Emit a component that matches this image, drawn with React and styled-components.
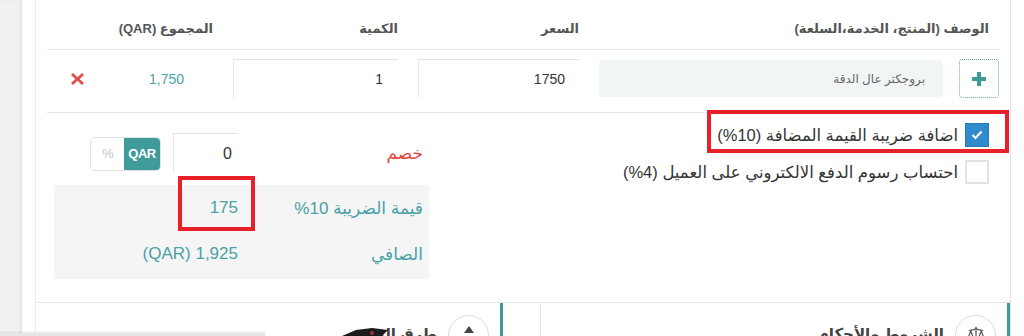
import React from 'react';
import styled, { createGlobalStyle } from 'styled-components';
import { Scale } from 'lucide-react';

const Global = createGlobalStyle`
  html, body { margin: 0; padding: 0; background: #fff; overflow: hidden; }
  body { font-family: "Liberation Sans", "DejaVu Sans", sans-serif; }
  * { box-sizing: border-box; }
`;

const TEAL = '#3f9a9a';
const TEAL_TEXT = '#4aa2a6';

const Page = styled.div`
  position: relative;
  display: flex;
  width: 1024px;
  height: 336px;
  overflow: hidden;
  background: #fff;
`;

const Gutter = styled.div`
  flex: none;
  width: 22px;
  background: #f1f1f1;
  box-shadow: inset -2px 0 3px rgba(0, 0, 0, 0.05);
`;

const Card = styled.div`
  flex: none;
  width: 989px;
  padding-left: 13px;
`;

const Inner = styled.div`
  height: 100%;
  direction: rtl;
  display: flex;
  flex-direction: column;
  border-left: 1px solid #ececec;
  border-right: 1px solid #e3e3e3;
`;

const Top = styled.div`
  flex: none;
  padding: 0 11px;
`;

const Grid = styled.div`
  display: grid;
  grid-template-columns: 400px 161px 165px 1fr;
  column-gap: 20px;
  border-bottom: 1px solid #e6e6e6;
`;

const HeaderRow = styled(Grid)`
  height: 50px;
  align-items: center;
  padding-top: 7px;
`;

const HeaderCell = styled.div`
  font-size: 13px;
  font-weight: bold;
  color: #555;
  padding-right: ${(p) => p.$pad || 0}px;
  white-space: nowrap;
`;

const ItemRow = styled(Grid)`
  height: 63px;
  align-items: start;
  padding-top: 9px;
`;

const DescCell = styled.div`
  display: flex;
  gap: 16px;
`;

const PlusButton = styled.div`
  flex: none;
  width: 40px;
  height: 39px;
  border: 1px dotted #6aa9ab;
  border-radius: 3px;
  display: flex;
  align-items: center;
  justify-content: center;
`;

const DescInput = styled.div`
  flex: 1;
  height: 37px;
  margin-top: 1px;
  background: #f2f5f5;
  border-radius: 4px;
  padding-right: 18px;
  display: flex;
  align-items: center;
  font-size: 12px;
  color: #666;
`;

const NumInput = styled.div`
  height: 39px;
  border-top: 1px solid #e3e3e3;
  border-left: 1px solid #e8e8e8;
  padding-right: ${(p) => p.$pad}px;
  display: flex;
  align-items: center;
  font-size: 14px;
  color: #333;
`;

const TotalCell = styled.div`
  height: 39px;
  display: flex;
  align-items: center;
  padding-right: 29px;
`;

const TotalValue = styled.span`
  font-size: 14px;
  color: ${TEAL_TEXT};
`;

const RemoveX = styled.span`
  margin-right: auto;
  margin-left: 23px;
  display: flex;
`;

const Summary = styled.div`
  flex: none;
  height: 190px;
  display: flex;
  justify-content: space-between;
  padding: 10px 21px 0 18px;
  border-bottom: 1px solid #e6e6e6;
`;

const Options = styled.div`
  display: flex;
  flex-direction: column;
  align-items: flex-start;
  gap: 13px;
`;

const OptionRow = styled.div`
  position: relative;
  display: flex;
  align-items: center;
  gap: 7px;
  font-size: 16.5px;
  color: #333;
`;

const Box = styled.span`
  flex: none;
  width: 24px;
  height: 24px;
  display: flex;
  align-items: center;
  justify-content: center;
  border: ${(p) => (p.$checked ? '1px solid #2a7db6' : '2px solid #e2e2de')};
  background: ${(p) => (p.$checked ? '#2f8bcb' : '#fff')};
`;

const Highlight = styled.div`
  position: absolute;
  border: 4px solid #e8202a;
  pointer-events: none;
`;

const Totals = styled.div`
  width: 375px;
  margin-top: 10px;
  display: flex;
  flex-direction: column;
  gap: 12px;
`;

const DiscountRow = styled.div`
  display: flex;
  align-items: center;
`;

const LabelCell = styled.div`
  width: 191px;
  padding-right: 6px;
  font-size: 17px;
  color: ${(p) => p.$color || TEAL_TEXT};
`;

const SmallInput = styled.div`
  width: 65px;
  height: 40px;
  border-top: 1px solid #e3e3e3;
  border-left: 1px solid #e8e8e8;
  padding-right: 6px;
  display: flex;
  align-items: center;
  font-size: 16px;
  color: #333;
`;

const Toggle = styled.div`
  margin-right: 12px;
  margin-top: 1px;
  display: flex;
  direction: ltr;
  height: 34px;
  border: 1px solid #e2e2e2;
  border-radius: 5px;
  overflow: hidden;
`;

const ToggleOpt = styled.span`
  width: ${(p) => p.$w}px;
  display: flex;
  align-items: center;
  justify-content: center;
  font-size: 13px;
  font-weight: ${(p) => (p.$on ? 'bold' : 'normal')};
  background: ${(p) => (p.$on ? TEAL : '#fff')};
  color: ${(p) => (p.$on ? '#fff' : '#c4c4c4')};
  letter-spacing: -0.5px;
`;

const GrayBox = styled.div`
  background: #f5f5f5;
  height: 94px;
  display: flex;
  flex-direction: column;
`;

const SumRow = styled.div`
  height: 46px;
  display: flex;
  align-items: center;
`;

const ValueCell = styled.div`
  position: relative;
  font-size: 17px;
  color: ${TEAL_TEXT};
  direction: ltr;
  width: 120px;
  height: 100%;
  display: flex;
  align-items: center;
  justify-content: flex-end;
`;

const Panels = styled.div`
  flex: 1;
  display: flex;
  justify-content: space-between;
`;

const Panel = styled.div`
  width: ${(p) => p.$w}px;
  display: flex;
  align-items: flex-start;
  gap: 11px;
  padding: 12px 11px 0 0;
  border-right: 3px solid ${TEAL};
  border-left: ${(p) => (p.$leftBorder ? '1px solid #e8e8e8' : 'none')};
`;

const Circle = styled.div`
  flex: none;
  width: 41px;
  height: 41px;
  border-radius: 50%;
  border: 1px solid #dcdcdc;
  display: flex;
  align-items: flex-start;
  justify-content: center;
  padding-top: 9px;
  color: #555;
`;

const PanelTitle = styled.div`
  margin-top: 10px;
  font-size: 15px;
  font-weight: bold;
  color: #444;
`;

const TaskStrip = styled.div`
  position: absolute;
  left: 0;
  bottom: 0;
  width: 265px;
  height: 3px;
  background: #e6e6e6;
  box-shadow: 0 -1px 2px rgba(0, 0, 0, 0.1);
`;

const Blob = styled.svg`
  position: absolute;
  left: 342px;
  bottom: 0;
`;

export default function App() {
  return (
    <>
      <Global />
      <Page>
        <Gutter />
        <Card>
          <Inner>
            <Top>
              <HeaderRow>
                <HeaderCell $pad={10}>الوصف (المنتج، الخدمة،السلعة)</HeaderCell>
                <HeaderCell>السعر</HeaderCell>
                <HeaderCell>الكمية</HeaderCell>
                <HeaderCell>المجموع (QAR)</HeaderCell>
              </HeaderRow>
              <ItemRow>
                <DescCell>
                  <PlusButton>
                    <svg width="14" height="14" viewBox="0 0 14 14">
                      <path d="M5 0h4v5h5v4H9v5H5V9H0V5h5z" fill={TEAL} />
                    </svg>
                  </PlusButton>
                  <DescInput>بروجكتر عال الدقة</DescInput>
                </DescCell>
                <NumInput $pad={14}>1750</NumInput>
                <NumInput $pad={15}>1</NumInput>
                <TotalCell>
                  <TotalValue>1,750</TotalValue>
                  <RemoveX>
                    <svg width="15" height="14" viewBox="0 0 15 14">
                      <path d="M1 3l2-2 4.5 4.2L12 1l2 2-4.3 4 4.3 4-2 2-4.5-4.2L3 13l-2-2 4.3-4z" fill="#e0504a" />
                    </svg>
                  </RemoveX>
                </TotalCell>
              </ItemRow>
            </Top>
            <Summary>
              <Options>
                <OptionRow>
                  <Box $checked>
                    <svg width="12" height="10" viewBox="0 0 12 10">
                      <path d="M1.5 5l3 3 6-6.5" stroke="#fff" strokeWidth="2.2" fill="none" />
                    </svg>
                  </Box>
                  <span>اضافة ضريبة القيمة المضافة (10%)</span>
                  <Highlight style={{ top: -13, bottom: -6, right: -20, left: -10 }} />
                </OptionRow>
                <OptionRow>
                  <Box />
                  <span>احتساب رسوم الدفع الالكتروني على العميل (4%)</span>
                </OptionRow>
              </Options>
              <Totals>
                <DiscountRow>
                  <LabelCell $color="#e2443a">خصم</LabelCell>
                  <SmallInput>0</SmallInput>
                  <Toggle>
                    <ToggleOpt $w={33}>%</ToggleOpt>
                    <ToggleOpt $w={36} $on>QAR</ToggleOpt>
                  </Toggle>
                </DiscountRow>
                <GrayBox>
                  <SumRow>
                    <LabelCell>قيمة الضريبة 10%</LabelCell>
                    <ValueCell>
                      175
                      <Highlight style={{ top: -9, right: -17, width: 77, height: 55 }} />
                    </ValueCell>
                  </SumRow>
                  <SumRow>
                    <LabelCell>الصافي</LabelCell>
                    <ValueCell>(QAR) 1,925</ValueCell>
                  </SumRow>
                </GrayBox>
              </Totals>
            </Summary>
            <Panels>
              <Panel $w={470} $leftBorder>
                <Circle>
                  <Scale size={18} strokeWidth={1.6} />
                </Circle>
                <PanelTitle>الشروط والأحكام</PanelTitle>
              </Panel>
              <Panel $w={467}>
                <Circle>
                  <svg width="12" height="10" viewBox="0 0 12 10">
                    <path d="M6 1L11 8H1z" fill="#444" />
                  </svg>
                </Circle>
                <PanelTitle>طرق الدفع</PanelTitle>
              </Panel>
            </Panels>
          </Inner>
        </Card>
        <TaskStrip />
        <Blob width="46" height="9" viewBox="0 0 46 9">
          <path d="M0 9L14 3L30 1L46 3L40 9z" fill="#1a1a1a" />
          <circle cx="30" cy="6" r="2" fill="#a03040" />
        </Blob>
      </Page>
    </>
  );
}
